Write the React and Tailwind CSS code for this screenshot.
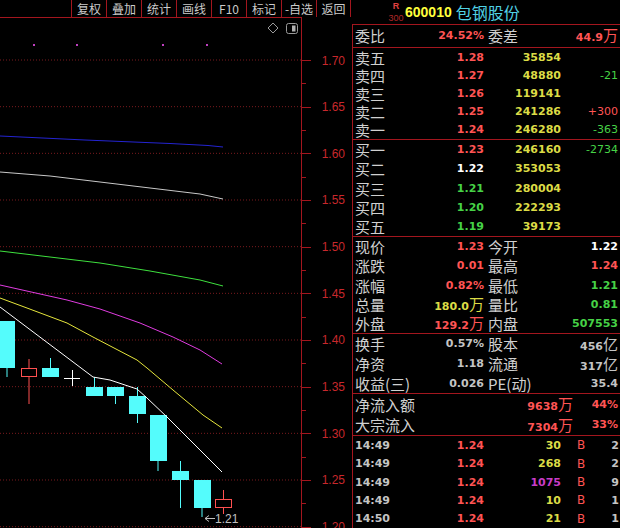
const cjk = "font-['Noto_Sans_CJK_SC',sans-serif] text-[15px] leading-none text-[#d0d0d0]";
const num = "font-['DejaVu_Sans',sans-serif] font-bold text-[11px] leading-none";
const thin = "font-['DejaVu_Sans',sans-serif] text-[11px] leading-none";
const line = 'border-[#a3161e]';

const RED = 'text-[#ff5454]';
const YEL = 'text-[#dcdc46]';
const GRN = 'text-[#46d246]';
const GRY = 'text-[#c4c4c4]';
const WHT = 'text-white';

const tools = ['复权', '叠加', '统计', '画线', 'F10', '标记', '-自选', '返回'];

const sells = [
  ['卖五', '1.28', '35854', '', ''],
  ['卖四', '1.27', '48880', '-21', GRN],
  ['卖三', '1.26', '119141', '', ''],
  ['卖二', '1.25', '241286', '+300', RED],
  ['卖一', '1.24', '246280', '-363', GRN],
];

const buys = [
  ['买一', '1.23', RED, '246160', '-2734', GRN],
  ['买二', '1.22', WHT, '353053', '', ''],
  ['买三', '1.21', GRN, '280004', '', ''],
  ['买四', '1.20', GRN, '222293', '', ''],
  ['买五', '1.19', GRN, '39173', '', ''],
];

const quotes = [
  ['现价', '1.23', RED, '', '今开', '1.22', WHT, ''],
  ['涨跌', '0.01', RED, '', '最高', '1.24', RED, ''],
  ['涨幅', '0.82%', RED, '', '最低', '1.21', GRN, ''],
  ['总量', '180.0', YEL, '万', '量比', '0.81', GRN, ''],
  ['外盘', '129.2', RED, '万', '内盘', '507553', GRN, ''],
];

const extras = [
  ['换手', '0.57%', '', '股本', '456', '亿'],
  ['净资', '1.18', '', '流通', '317', '亿'],
  ['收益(三)', '0.026', '', 'PE(动)', '35.4', ''],
];

const trades = [
  ['14:49', '30', YEL, '2'],
  ['14:49', '268', YEL, '2'],
  ['14:49', '1075', 'text-[#c83cc8]', '9'],
  ['14:49', '10', YEL, '1'],
  ['14:50', '21', YEL, '1'],
];

const cyanBars = [
  // x0, x1, bodyTop, bodyBottom, wickX, wickTop, wickBottom
  [-2, 15, 321, 368, 7, 321, 377],
  [42, 59, 368, 377, 50.5, 358, 377],
  [86, 103, 387, 396, 94.5, 377, 396],
  [107, 124, 387, 396, 115.5, 387, 404],
  [129, 146, 396, 414, 137.5, 387, 423],
  [150, 167, 415, 461, 158, 415, 471],
  [172, 189, 471, 480, 180.5, 461, 508],
  [194, 211, 480, 508, 202, 480, 517],
];

const redBars = [
  [21, 37, 368, 377, 29, 359, 404],
  [215, 232, 499, 508, 223.5, 490, 514],
];

const ma = [
  ['#2424d2', '0,136 85,140 170,143.5 208,145.5 223,147'],
  ['#c8c8c8', '0,172 50,176 100,182 150,188 200,194 223,199'],
  ['#3ee03e', '0,251 50,257 100,263 150,271 200,280 223,286'],
  ['#e03ce0', '0,285 67,300 100,309 140,323 173,337 200,350 222,364'],
  ['#e6e63c', '0,298 27,308 67,323 93,337 137,360 147,368 173,390 203,415 222,428'],
  ['#ffffff', '0,307 93,377 110,380 137,389 147,398 167,417 187,437 222,472'],
];

const levels = [1.7, 1.65, 1.6, 1.55, 1.5, 1.45, 1.4, 1.35, 1.3, 1.25, 1.2];
const py = (p) => 60 + (1.7 - p) * 933.33;

function Chart() {
  return (
    <svg width="301" height="510" viewBox="0 18 301 510" className="block">
      {levels.map((p) => (
        <line key={p} x1="0" x2="301" y1={py(p)} y2={py(p)} stroke="#7a1a1e" strokeWidth="1" strokeDasharray="1 2" />
      ))}
      {[33, 76, 162, 206].map((x) => (
        <rect key={x} x={x} y="44" width="2" height="2" fill="#c040c0" />
      ))}
      <path d="M273 23 L278 28 L273 33 L268 28 Z" fill="none" stroke="#9a9a9a" strokeWidth="1" />
      <rect x="286.5" y="23.5" width="11" height="10" rx="2" fill="none" stroke="#9a9a9a" strokeWidth="1" />
      <rect x="292" y="25.5" width="3.5" height="6" fill="#b0b0b0" />
      {cyanBars.map(([x0, x1, t, b, wx, wt, wb], i) => (
        <g key={i}>
          <line x1={wx} x2={wx} y1={wt} y2={wb} stroke="#54fcfc" strokeWidth="1" />
          <rect x={x0} y={t} width={x1 - x0} height={b - t} fill="#54fcfc" />
        </g>
      ))}
      {redBars.map(([x0, x1, t, b, wx, wt, wb], i) => (
        <g key={i}>
          <line x1={wx} x2={wx} y1={wt} y2={t} stroke="#ff5050" strokeWidth="1" />
          <line x1={wx} x2={wx} y1={b} y2={wb} stroke="#ff5050" strokeWidth="1" />
          <rect x={x0 + 0.5} y={t + 0.5} width={x1 - x0 - 1} height={b - t - 1} fill="#000" stroke="#ff5050" strokeWidth="1" />
        </g>
      ))}
      <line x1="64" x2="80" y1="378.5" y2="378.5" stroke="#fff" strokeWidth="1" />
      <line x1="72.5" x2="72.5" y1="370" y2="386" stroke="#fff" strokeWidth="1" />
      {ma.map(([c, pts]) => (
        <polyline key={c} points={pts} fill="none" stroke={c} strokeWidth="1" />
      ))}
      <path d="M205 518.5 H215 M205 518.5 L209 515.5 M205 518.5 L209 521.5" stroke="#c0c0c0" strokeWidth="1" fill="none" />
      <text x="215" y="523" fill="#c0c0c0" fontSize="12" fontFamily="Liberation Sans, sans-serif">1.21</text>
    </svg>
  );
}

function Axis() {
  const minors = levels.slice(0, -1).map((p) => py(p) + 23.33);
  return (
    <svg width="50" height="511" viewBox="302 17 50 511" className="block">
      {levels.map((p) => (
        <g key={p}>
          <line x1="302" x2="311" y1={Math.round(py(p)) + 0.5} y2={Math.round(py(p)) + 0.5} stroke="#a3161e" />
          <text x="345" y={py(p) + 4.5} textAnchor="end" fill="#c8282c" fontSize="12" fontFamily="Liberation Sans, sans-serif">
            {p.toFixed(2)}
          </text>
        </g>
      ))}
      {minors.map((y) => (
        <line key={y} x1="302" x2="306" y1={Math.round(y) + 0.5} y2={Math.round(y) + 0.5} stroke="#a3161e" />
      ))}
    </svg>
  );
}

function Unit({ children, color }) {
  if (!children) return null;
  return <span className={`font-['Noto_Sans_CJK_SC',sans-serif] text-[15px] leading-none ${color}`}>{children}</span>;
}

export default function App() {
  return (
    <div className="w-[620px] h-[528px] bg-black flex overflow-hidden select-none">
      {/* chart side */}
      <div className="w-[352px] flex flex-col shrink-0">
        <div className="h-[17px] flex shrink-0">
          <div className="w-[71px]" />
          {tools.map((t, i) => (
            <div
              key={t}
              className={`w-[35px] border-l ${line} ${i === tools.length - 1 ? 'border-r' : ''} flex items-center justify-center font-['Noto_Sans_CJK_SC',sans-serif] text-[12px] leading-none text-[#cacaca]`}
            >
              {t}
            </div>
          ))}
        </div>
        <div className="flex-1 flex">
          <div className={`w-[302px] border-t border-r ${line}`}>
            <Chart />
          </div>
          <Axis />
        </div>
      </div>

      {/* quote panel */}
      <div className="flex-1 flex flex-col">
        <div className={`h-[25px] border-b ${line} flex items-center shrink-0`}>
          <div className="ml-[37px] w-[14px] h-[21px] flex flex-col items-center justify-between">
            <span className="font-['Liberation_Sans',sans-serif] font-bold text-[9px] leading-[9px] text-[#e04040]">R</span>
            <span className="font-['Liberation_Sans',sans-serif] text-[9px] leading-[9px] text-[#b02828]">300</span>
          </div>
          <span className="ml-[2px] font-['Liberation_Sans',sans-serif] font-bold text-[14px] leading-none text-[#ffff3c]">600010</span>
          <span className="ml-[4px] font-['Noto_Sans_CJK_SC',sans-serif] text-[16px] leading-none text-[#50d2e6]">包钢股份</span>
        </div>

        <div className={`flex-1 flex flex-col border-l ${line}`}>
          {/* 委比 */}
          <div className={`h-[23px] border-b ${line} flex items-center shrink-0 pb-[2px]`}>
            <div className="w-[131px] pl-[2px] flex items-center justify-between">
              <span className={cjk}>委比</span>
              <span className={`${num} ${RED}`}>24.52%</span>
            </div>
            <div className="flex-1 pl-[4px] pr-[2px] flex items-center justify-between">
              <span className={cjk}>委差</span>
              <span className="flex items-baseline">
                <span className={`${num} ${RED}`}>44.9</span>
                <Unit color={RED}>万</Unit>
              </span>
            </div>
          </div>

          {/* sells */}
          <div className={`h-[92px] border-b ${line} flex flex-col shrink-0`}>
            {sells.map(([l, p, v, c, cc]) => (
              <div key={l} className="flex-1 flex items-center">
                <div className="w-[131px] pl-[2px] flex items-center justify-between">
                  <span className={cjk}>{l}</span>
                  <span className={`${num} ${RED}`}>{p}</span>
                </div>
                <div className={`w-[77px] text-right ${num} ${YEL}`}>{v}</div>
                <div className={`flex-1 text-right pr-[2px] ${thin} ${cc}`}>{c}</div>
              </div>
            ))}
          </div>

          {/* buys */}
          <div className={`h-[97px] border-b ${line} flex flex-col shrink-0`}>
            {buys.map(([l, p, pc, v, c, cc]) => (
              <div key={l} className="flex-1 flex items-center">
                <div className="w-[131px] pl-[2px] flex items-center justify-between">
                  <span className={cjk}>{l}</span>
                  <span className={`${num} ${pc}`}>{p}</span>
                </div>
                <div className={`w-[77px] text-right ${num} ${YEL}`}>{v}</div>
                <div className={`flex-1 text-right pr-[2px] ${thin} ${cc}`}>{c}</div>
              </div>
            ))}
          </div>

          {/* quote */}
          <div className={`h-[97px] border-b ${line} flex flex-col shrink-0`}>
            {quotes.map(([l1, v1, c1, u1, l2, v2, c2, u2]) => (
              <div key={l1} className="flex-1 flex items-center">
                <div className="w-[131px] pl-[2px] flex items-center justify-between">
                  <span className={cjk}>{l1}</span>
                  <span className="flex items-baseline">
                    <span className={`${num} ${c1}`}>{v1}</span>
                    <Unit color={c1}>{u1}</Unit>
                  </span>
                </div>
                <div className="flex-1 pl-[4px] pr-[2px] flex items-center justify-between">
                  <span className={cjk}>{l2}</span>
                  <span className="flex items-baseline">
                    <span className={`${num} ${c2}`}>{v2}</span>
                    <Unit color={c2}>{u2}</Unit>
                  </span>
                </div>
              </div>
            ))}
          </div>

          {/* extras */}
          <div className={`h-[60px] border-b ${line} flex flex-col shrink-0`}>
            {extras.map(([l1, v1, u1, l2, v2, u2]) => (
              <div key={l1} className="flex-1 flex items-center">
                <div className="w-[131px] pl-[2px] flex items-center justify-between">
                  <span className={cjk}>{l1}</span>
                  <span className={`${num} ${GRY}`}>{v1}</span>
                </div>
                <div className="flex-1 pl-[4px] pr-[2px] flex items-center justify-between">
                  <span className={cjk}>{l2}</span>
                  <span className="flex items-baseline">
                    <span className={`${num} ${GRY}`}>{v2}</span>
                    <Unit color={GRY}>{u2}</Unit>
                  </span>
                </div>
              </div>
            ))}
          </div>

          {/* fund flow */}
          <div className={`h-[42px] border-b ${line} flex flex-col shrink-0`}>
            {[
              ['净流入额', '9638', '44%'],
              ['大宗流入', '7304', '33%'],
            ].map(([l, v, pct]) => (
              <div key={l} className="flex-1 flex items-center">
                <div className="w-[220px] pl-[2px] flex items-center justify-between">
                  <span className={cjk}>{l}</span>
                  <span className="flex items-baseline">
                    <span className={`${num} ${RED}`}>{v}</span>
                    <Unit color={RED}>万</Unit>
                  </span>
                </div>
                <div className={`flex-1 text-right pr-[2px] ${num} ${RED}`}>{pct}</div>
              </div>
            ))}
          </div>

          {/* ticks */}
          <div className="flex-1 flex flex-col">
            {trades.map(([t, v, vc, n], i) => (
              <div key={i} className="flex-1 flex items-center">
                <div className="w-[131px] pl-[2px] flex items-center justify-between">
                  <span className={`${num} ${GRY}`}>{t}</span>
                  <span className={`${num} ${RED}`}>1.24</span>
                </div>
                <div className={`w-[77px] text-right ${num} ${vc}`}>{v}</div>
                <div className="ml-[16px] font-['DejaVu_Sans',sans-serif] text-[12px] leading-none text-[#ff5454]">B</div>
                <div className={`flex-1 text-right pr-[1px] ${num} ${GRY}`}>{n}</div>
              </div>
            ))}
          </div>
        </div>
      </div>
    </div>
  );
}
